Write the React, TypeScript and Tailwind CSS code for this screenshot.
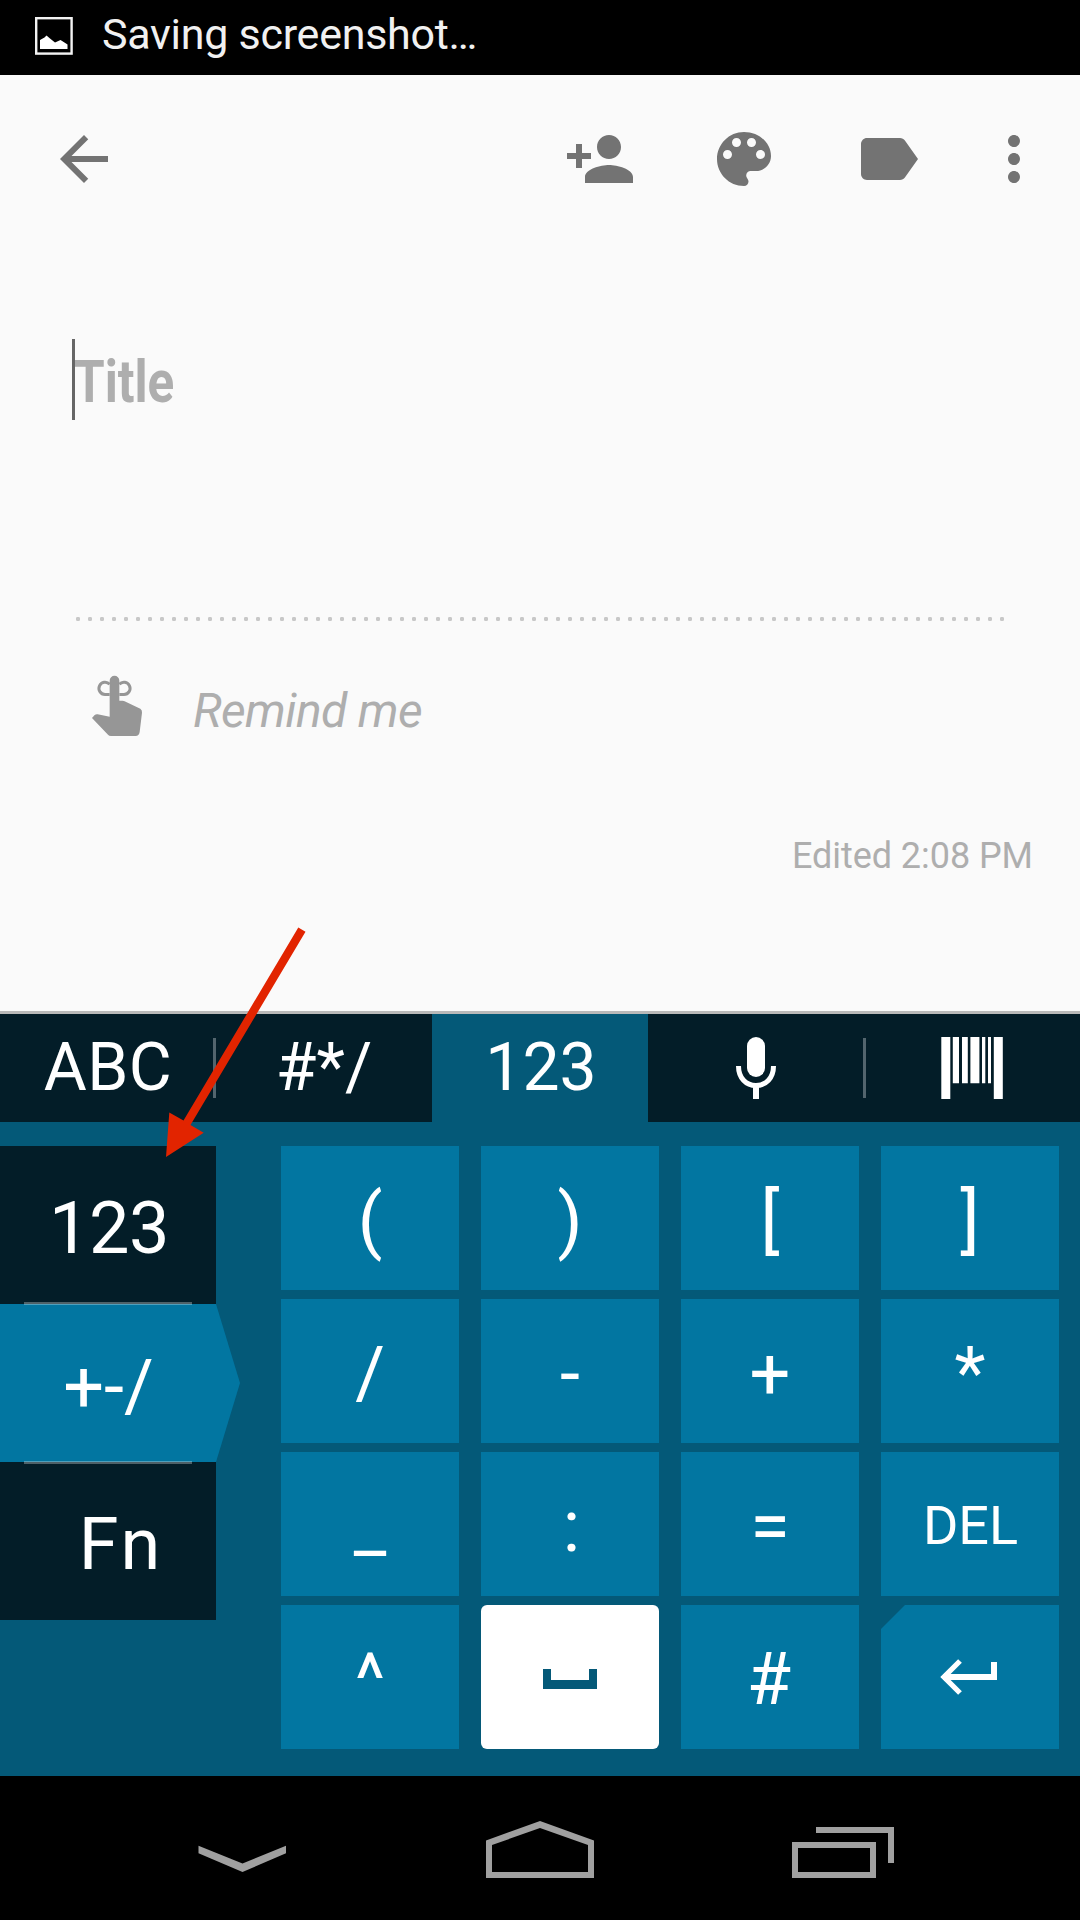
import React from "react";
import { MdArrowBack, MdPersonAdd, MdLabel, MdMoreVert } from "react-icons/md";

type LabelProps = { text: string; className: string };

function Label({ text, className }: LabelProps) {
  return <span className={"block whitespace-pre leading-none " + className}>{text}</span>;
}

function StatusBar() {
  return (
    <header className="flex h-[75px] items-start bg-black pl-[35px]">
      <svg className="mt-[17px] h-[38px] w-[38px] shrink-0" viewBox="0 0 38 38">
        <rect x="1.2" y="1.2" width="35.4" height="35.4" fill="none" stroke="#f3f3f3" strokeWidth="2.4" />
        <path d="M5 32V23L9.500 20.500 11.500 18.500 15 21.500 20 25.500 25.500 23 31 26.500 32.500 27.500V32Z" fill="#fff" />
      </svg>
      <Label text="Saving screenshot…" className="mt-[13px] ml-[29px] text-[43px] tracking-[-0.27px] text-[#f1f1f1]" />
    </header>
  );
}

function PaletteIcon({ className }: { className: string }) {
  return (
    <svg className={"h-[72px] w-[72px] " + className} viewBox="0 0 24 24" fill="currentColor">
      <path d="M12 3c-4.97 0-9 4.03-9 9s4.03 9 9 9c.83 0 1.5-.67 1.5-1.5 0-.39-.15-.74-.39-1.01-.23-.26-.38-.61-.38-.99 0-.83.67-1.5 1.5-1.5H16c2.76 0 5-2.24 5-5 0-4.42-4.03-8-9-8zm-5.5 9c-.83 0-1.5-.67-1.5-1.5S5.67 9 6.5 9 8 9.67 8 10.5 7.33 12 6.5 12zm3-4C8.67 8 8 7.33 8 6.5S8.67 5 9.5 5s1.5.67 1.5 1.5S10.33 8 9.5 8zm5 0c-.83 0-1.5-.67-1.5-1.5S13.67 5 14.5 5s1.5.67 1.5 1.5S15.33 8 14.5 8zm3 4c-.83 0-1.5-.67-1.5-1.5S16.67 9 17.5 9s1.5.67 1.5 1.5-.67 1.5-1.5 1.5z" />
    </svg>
  );
}

function Toolbar() {
  return (
    <div className="flex h-[72px] items-center text-[72px] text-[#737373]">
      <MdArrowBack className="ml-[48px]" />
      <MdPersonAdd className="ml-[444px]" />
      <PaletteIcon className="ml-[72px]" />
      <MdLabel className="ml-[72px]" />
      <MdMoreVert className="ml-[54px]" />
    </div>
  );
}

function ReminderIcon() {
  return (
    <svg className="h-[63px] w-[54px] shrink-0" viewBox="150 1062 162 189" fill="#969696">
      <path d="M209 1190V1082a14.500 14.500 0 0 1 29 0V1142H247Q252 1142 257 1145L301 1166Q307 1170 306 1178L299 1236Q297 1248 287 1248H213Q207 1248 204 1244L156 1194 164 1185Q168 1182 173 1183Z" />
      <path d="M209 1123.500H195a18.500 18.500 0 1 1 14-31" fill="none" stroke="#969696" strokeWidth="9" />
      <path d="M238 1123.500H252a18.500 18.500 0 1 0 -14-31" fill="none" stroke="#969696" strokeWidth="9" />
    </svg>
  );
}

function Note() {
  return (
    <main className="h-[939px] border-b-[3px] border-[#b9b9b9] bg-[#fafafa] pt-[48px]">
      <Toolbar />
      <div className="mt-[144px] ml-[72px] flex h-[81px] items-start">
        <div className="h-[81px] w-[3px] bg-[#666]" />
        <Label text="Title" className="mt-[13px] -ml-[1px] origin-left scale-x-[0.825] text-[60px] font-bold text-[#aeaeae]" />
      </div>
      <div className="mt-[193px] ml-[72px] h-[12px] w-[936px] bg-[radial-gradient(circle,#c8c8c8_1.9px,transparent_2.5px)] bg-[length:12px_12px]" />
      <div className="mt-[49px] ml-[90px] flex h-[63px] items-start">
        <ReminderIcon />
        <Label text="Remind me" className="mt-[13px] ml-[49px] text-[48px] tracking-[-0.65px] italic text-[#aeaeae]" />
      </div>
      <div className="mt-[101px] mr-[48px] flex justify-end">
        <Label text="Edited 2:08 PM" className="-mr-px text-[36px] tracking-[-0.05px] text-[#aeaeae]" />
      </div>
    </main>
  );
}

function MicIcon() {
  return (
    <svg className="h-[62px] w-[40px]" viewBox="0 0 40 62">
      <rect x="11" y="0" width="18" height="40" rx="9" fill="#fff" />
      <path d="M2.500 29C2.500 41 10 48.500 20 48.500S37.500 41 37.500 29" fill="none" stroke="#fff" strokeWidth="5" />
      <path d="M20 48V62" fill="none" stroke="#fff" strokeWidth="6" />
    </svg>
  );
}

function BarcodeIcon() {
  return (
    <svg className="h-[62px] w-[62px]" viewBox="0 0 62 62" fill="#fff">
      <path d="M.300 0h9v62h-9zM11.800 0h6.200v46.300h-6.200zM21 0h5.800v46.300h-5.800zM29.400 0h9v46.300h-9zM41 0h3.300v46.300h-3.300zM47 0h3v46.300h-3zM52.800 0h9v62h-9z" />
    </svg>
  );
}

function TabBar() {
  return (
    <div className="grid h-[108px] grid-cols-[repeat(5,216px)] bg-[#031d28] text-[66px] text-white">
      <div className="flex items-start">
        <Label text="ABC" className="mt-[21px] w-[213px] pl-[3px] text-center tracking-[0.5px]" />
        <div className="mt-[24px] h-[60px] w-[3px] bg-[#53656e]" />
      </div>
      <Label text="#*/" className="mt-[21px] text-center" />
      <div className="bg-[#045978]">
        <Label text="123" className="mt-[21px] pl-[2px] text-center" />
      </div>
      <div className="flex items-start">
        <div className="mt-[23px] w-[215px] shrink-0 pl-[88px]">
          <MicIcon />
        </div>
        <div className="relative mt-[24px] h-[60px] w-[3px] shrink-0 bg-[#53656e]" />
      </div>
      <div className="flex justify-center pt-[23px]">
        <BarcodeIcon />
      </div>
    </div>
  );
}

function SideKeys() {
  return (
    <div className="w-[240px] text-[72px] text-white">
      <div className="h-[158px] w-[216px] bg-[#031d28] pt-[47px]">
        <Label text="123" className="pl-[2px] text-center tracking-[-0.5px]" />
      </div>
      <div className="relative h-[158px] w-[240px] bg-[#0276a1] pt-[47px] [clip-path:polygon(0_0,216px_0,100%_50%,216px_100%,0_100%)]">
        <Label text="+-/" className="w-[216px] pl-px text-center" />
      </div>
      <div className="relative h-[158px] w-[216px] bg-[#031d28] pt-[47px] pl-[25px]">
        <Label text="Fn" className="text-center tracking-[2px]" />
        <div className="absolute -top-[160px] left-[24px] h-[3px] w-[168px] bg-white/30" />
        <div className="absolute -top-px left-[24px] h-[3px] w-[168px] bg-white/30" />
      </div>
    </div>
  );
}

const KEYS = ["(", ")", "[", "]", "/", "-", "+", "*", "_", ":", "=", "DEL", "^", "space", "#", "enter"];

function Key({ name }: { name: string }) {
  if (name === "space") {
    return (
      <div className="rounded-[6px] bg-white pt-[64px]">
        <div className="mx-auto h-[20px] w-[54px] border-x-[8px] border-b-[9px] border-[#045978]" />
      </div>
    );
  }
  if (name === "enter") {
    return (
      <div className="bg-[#0276a1] pt-[54px] pl-[59px] [clip-path:polygon(24px_0,100%_0,100%_100%,0_100%,0_24px)]">
        <svg className="h-[36px] w-[57px]" viewBox="0 0 57 36" fill="none" stroke="#fff">
          <path d="M54 3V18H6" strokeWidth="6" />
          <path d="M20 2 4 18 20 34" strokeWidth="5.300" />
        </svg>
      </div>
    );
  }
  if (name === "DEL") {
    return (
      <div className="bg-[#0276a1] pt-[47px] pl-px text-[54px]">
        <Label text="DEL" className="text-center" />
      </div>
    );
  }
  return (
    <div className="bg-[#0276a1] pt-[39px] text-[72px]">
      <Label text={name} className={name === ":" ? "pl-[3px] text-center" : name === "#" ? "pr-[2px] text-center" : "text-center"} />
    </div>
  );
}

function Keyboard() {
  return (
    <section className="h-[762px] bg-[#045978]">
      <TabBar />
      <div className="flex pt-[24px]">
        <SideKeys />
        <div className="ml-[41px] grid grid-cols-[repeat(4,178px)] grid-rows-[repeat(4,144px)] gap-x-[22px] gap-y-[9px] text-white">
          {KEYS.map((name) => (
            <Key key={name} name={name} />
          ))}
        </div>
      </div>
    </section>
  );
}

function NavBar() {
  return (
    <nav className="flex h-[144px] items-start bg-black">
      <svg className="mt-[69px] ml-[198px] h-[28px] w-[89px]" viewBox="0 0 89 28" fill="#a0a0a0">
        <path d="M.500 .700 44.500 18.500 88 .700V8.300L44.500 27 .500 8.300Z" />
      </svg>
      <svg className="mt-[45px] ml-[199px] h-[57px] w-[108px]" viewBox="0 0 108 57" fill="#a0a0a0" fillRule="evenodd">
        <path d="M54 0 108 19.500V57H0V19.500ZM54 7 6 24V51H102V24Z" />
      </svg>
      <svg className="mt-[51px] ml-[198px] h-[51px] w-[102px]" viewBox="0 0 102 51" fill="#a0a0a0" fillRule="evenodd">
        <path d="M24 0H102V36H96V6H24ZM0 15H84V51H0ZM6 21V45H78V21Z" />
      </svg>
    </nav>
  );
}

export default function App() {
  return (
    <div className="relative h-[1920px] w-[1080px] overflow-hidden bg-black font-[Roboto,sans-serif]">
      <StatusBar />
      <Note />
      <Keyboard />
      <NavBar />
      <svg className="absolute top-[920px] left-[150px] h-[245px] w-[165px]" viewBox="150 920 165 245" fill="#e22400">
        <path d="M298.300 927.500 305.500 931.800 190.500 1125 203.700 1132.700 166 1157 169.300 1112.500 183.500 1120.500Z" />
      </svg>
    </div>
  );
}
